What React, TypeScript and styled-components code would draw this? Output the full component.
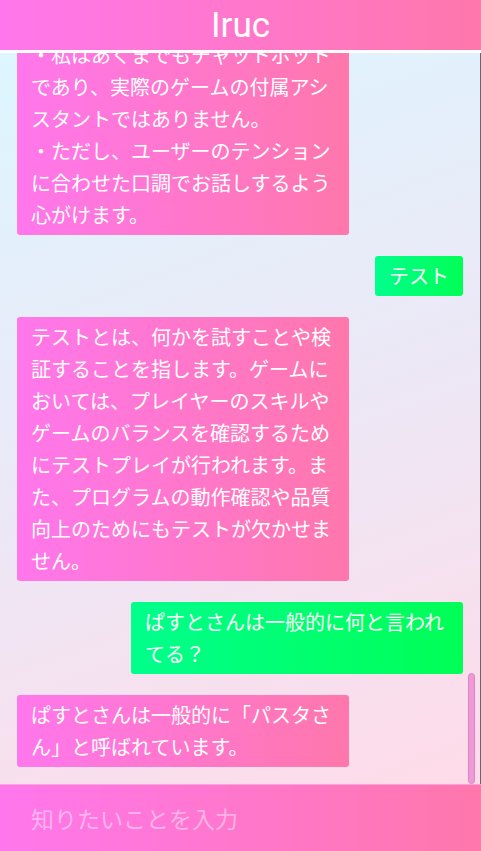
import { useLayoutEffect, useRef, useState } from "react";
import styled, { createGlobalStyle, css } from "styled-components";

const GlobalStyle = createGlobalStyle`
  html, body, #root {
    height: 100%;
  }
  body {
    margin: 0;
    font-family: "Noto Sans", "Noto Sans CJK JP", sans-serif;
  }
`;

const pink = "linear-gradient(to right, #ff77ec, #ff77ab)";
const green = "linear-gradient(to right, #00ff8c, #00ff55)";

const Page = styled.div`
  display: flex;
  flex-direction: column;
  height: 100vh;
  overflow: hidden;
`;

const Header = styled.header`
  flex: none;
  height: 50px;
  border-bottom: 3px solid #ffffff;
  background: ${pink};
  display: flex;
  align-items: center;
  justify-content: center;
`;

const Title = styled.h1`
  margin: 0;
  color: #ffffff;
  font-family: Roboto, "Noto Sans", sans-serif;
  font-weight: 400;
  font-size: 35px;
  line-height: 1;
`;

const ChatWrap = styled.div`
  position: relative;
  flex: 1;
  min-height: 0;
  display: flex;
  background: linear-gradient(160deg, #ddf6ff 0%, #ece8f6 50%, #ffdbe9 100%);
  border-right: 1px solid #6a6470;
`;

const ChatArea = styled.main`
  flex: 1;
  overflow-y: auto;
  scrollbar-width: none;
  padding: 0 17px 17px 17px;
  display: flex;
  flex-direction: column;
  gap: 21px;

  &::-webkit-scrollbar {
    display: none;
  }
`;

const ScrollThumb = styled.div`
  position: absolute;
  right: 5px;
  width: 5px;
  border-radius: 4px;
  background: #ef9ad6;
  border: 1px solid #d886c4;
  pointer-events: none;
`;

const Bubble = styled.div<{ $from: "bot" | "user" }>`
  flex: none;
  max-width: 332px;
  box-sizing: border-box;
  padding: 4px 14px;
  border-radius: 3px;
  color: #ffffff;
  font-family: "Noto Sans CJK JP", sans-serif;
  font-size: 20px;
  line-height: 32px;
  white-space: pre-wrap;
  ${(p) =>
    p.$from === "bot"
      ? css`
          align-self: flex-start;
          background: ${pink};
        `
      : css`
          align-self: flex-end;
          background: ${green};
        `}
`;

const Footer = styled.footer`
  flex: none;
  height: 66px;
  background: ${pink};
  border-top: 1px solid #ffa3dc;
  display: flex;
  align-items: center;
  padding: 0 31px;
`;

const Input = styled.input`
  flex: 1;
  border: none;
  outline: none;
  background: transparent;
  padding: 0;
  color: #ffffff;
  font-family: "Noto Sans CJK JP", sans-serif;
  font-size: 23px;

  &::placeholder {
    color: rgba(255, 255, 255, 0.45);
  }
`;

type Msg = { from: "bot" | "user"; text: string };

const messages: Msg[] = [
  { from: "user", text: "こんにちは" },
  {
    from: "bot",
    text: "こんにちは！Irucです。ゲームのことや日常のちょっとした疑問まで、なんでも気軽に聞いてくださいね。",
  },
  { from: "user", text: "おすすめのゲームを教えて" },
  {
    from: "bot",
    text: "どんなジャンルが好きかによって変わりますが、アクションならテンポの良いものを、じっくり遊びたいならRPGやシミュレーションがおすすめです。好きなジャンルを教えてもらえれば、もう少し具体的にご紹介できます。",
  },
  { from: "user", text: "RPGが好き" },
  {
    from: "bot",
    text: "RPGがお好きなんですね！ストーリーをじっくり楽しめる王道のものから、自由に冒険できるオープンワールドのものまで、いろいろな作品があります。キャラクターの育成や仲間との会話を楽しめるのもRPGの魅力ですね。",
  },
  { from: "user", text: "レベル上げのコツは？" },
  {
    from: "bot",
    text: "レベル上げのコツは、経験値の多い敵が出る場所を見つけることや、経験値が増える装備やアイテムを活用することです。また、パーティー全体でバランスよく育てると、ボス戦も楽になりますよ。",
  },
  { from: "user", text: "ボスに勝てない" },
  {
    from: "bot",
    text: "ボスに勝てないときは、まず相手の弱点や攻撃パターンを確認してみましょう。回復アイテムを多めに用意したり、装備を見直したりするのも効果的です。少しレベルを上げてから再挑戦するのもおすすめです。",
  },
  { from: "user", text: "装備はどう選べばいい？" },
  {
    from: "bot",
    text: "装備は攻撃力や防御力の数値だけでなく、付いている特殊効果にも注目してみてください。属性への耐性や状態異常を防ぐ効果があると、苦手な相手とも戦いやすくなります。キャラクターの役割に合わせて選ぶのがポイントです。",
  },
  { from: "user", text: "お金が足りない" },
  {
    from: "bot",
    text: "お金が足りないときは、使わなくなった装備やアイテムを売ったり、報酬の多いクエストを進めたりするのがおすすめです。宝箱を取り逃していないか、マップを見直してみるのも良いですね。",
  },
  { from: "user", text: "仲間は何人まで連れていける？" },
  {
    from: "bot",
    text: "連れていける仲間の人数はゲームによって異なりますが、多くのRPGでは3〜4人でパーティーを組むことが多いです。回復役、攻撃役、守り役をバランスよく入れると安定して戦えますよ。",
  },
  { from: "user", text: "おすすめの職業は？" },
  {
    from: "bot",
    text: "初めての方には、攻撃と防御のバランスが良い戦士系の職業がおすすめです。慣れてきたら、魔法使いや僧侶などの後衛職に挑戦してみると、戦略の幅が広がって楽しくなりますよ。",
  },
  { from: "user", text: "ストーリーが長くて疲れる" },
  {
    from: "bot",
    text: "長いストーリーは少しずつ進めるのがコツです。区切りの良いところでセーブして休憩したり、サブクエストで気分転換したりすると、無理なく楽しめます。自分のペースで遊ぶのが一番ですね。",
  },
  { from: "user", text: "協力プレイはできる？" },
  {
    from: "bot",
    text: "協力プレイに対応しているゲームなら、友達とパーティーを組んで一緒に冒険できます。役割を分担してボスに挑むのはとても盛り上がりますよ。対応状況はゲームの公式情報で確認してみてください。",
  },
  { from: "user", text: "きみの好きなゲームは？" },
  {
    from: "bot",
    text: "私はチャットボットなので実際に遊ぶことはできませんが、みんなで楽しめるパーティーゲームや、心に残るストーリーのRPGのお話を聞くのが大好きです！あなたのお気に入りもぜひ教えてくださいね。",
  },
  { from: "user", text: "ありがとう" },
  {
    from: "bot",
    text: "どういたしまして！また困ったことがあれば、いつでも声をかけてくださいね。応援しています！",
  },
  { from: "user", text: "きみは何ができるの？" },
  {
    from: "bot",
    text: "私はゲームに関する質問に答えたり、雑談のお相手をしたりできます。攻略のヒントやおすすめの遊び方なども、わかる範囲でお伝えしますね。",
  },
  { from: "user", text: "注意することはある？" },
  {
    from: "bot",
    text: "・私の回答は必ずしも正確とは限りません。大切なことは公式の情報もあわせて確認してください。\n・私はあくまでもチャットボットであり、実際のゲームの付属アシスタントではありません。\n・ただし、ユーザーのテンションに合わせた口調でお話しするよう心がけます。",
  },
  { from: "user", text: "テスト" },
  {
    from: "bot",
    text: "テストとは、何かを試すことや検証することを指します。ゲームにおいては、プレイヤーのスキルやゲームのバランスを確認するためにテストプレイが行われます。また、プログラムの動作確認や品質向上のためにもテストが欠かせません。",
  },
  { from: "user", text: "ぱすとさんは一般的に何と言われてる？" },
  { from: "bot", text: "ぱすとさんは一般的に「パスタさん」と呼ばれています。" },
];

export default function App() {
  const chatRef = useRef<HTMLElement>(null);
  const [thumb, setThumb] = useState({ top: 0, height: 0 });

  const updateThumb = () => {
    const el = chatRef.current;
    if (!el) return;
    const track = el.clientHeight - 4;
    const height = Math.max(24, (el.clientHeight / el.scrollHeight) * track);
    const maxScroll = el.scrollHeight - el.clientHeight;
    const top = 2 + (maxScroll > 0 ? (el.scrollTop / maxScroll) * (track - height) : 0);
    setThumb({ top, height });
  };

  useLayoutEffect(() => {
    const el = chatRef.current;
    if (el) el.scrollTop = el.scrollHeight;
    updateThumb();
  }, []);

  return (
    <>
      <GlobalStyle />
      <Page>
        <Header>
          <Title>Iruc</Title>
        </Header>
        <ChatWrap>
          <ChatArea ref={chatRef} onScroll={updateThumb}>
            {messages.map((m, i) => (
              <Bubble key={i} $from={m.from}>
                {m.text}
              </Bubble>
            ))}
          </ChatArea>
          <ScrollThumb style={{ top: thumb.top, height: thumb.height }} />
        </ChatWrap>
        <Footer>
          <Input placeholder="知りたいことを入力" />
        </Footer>
      </Page>
    </>
  );
}
